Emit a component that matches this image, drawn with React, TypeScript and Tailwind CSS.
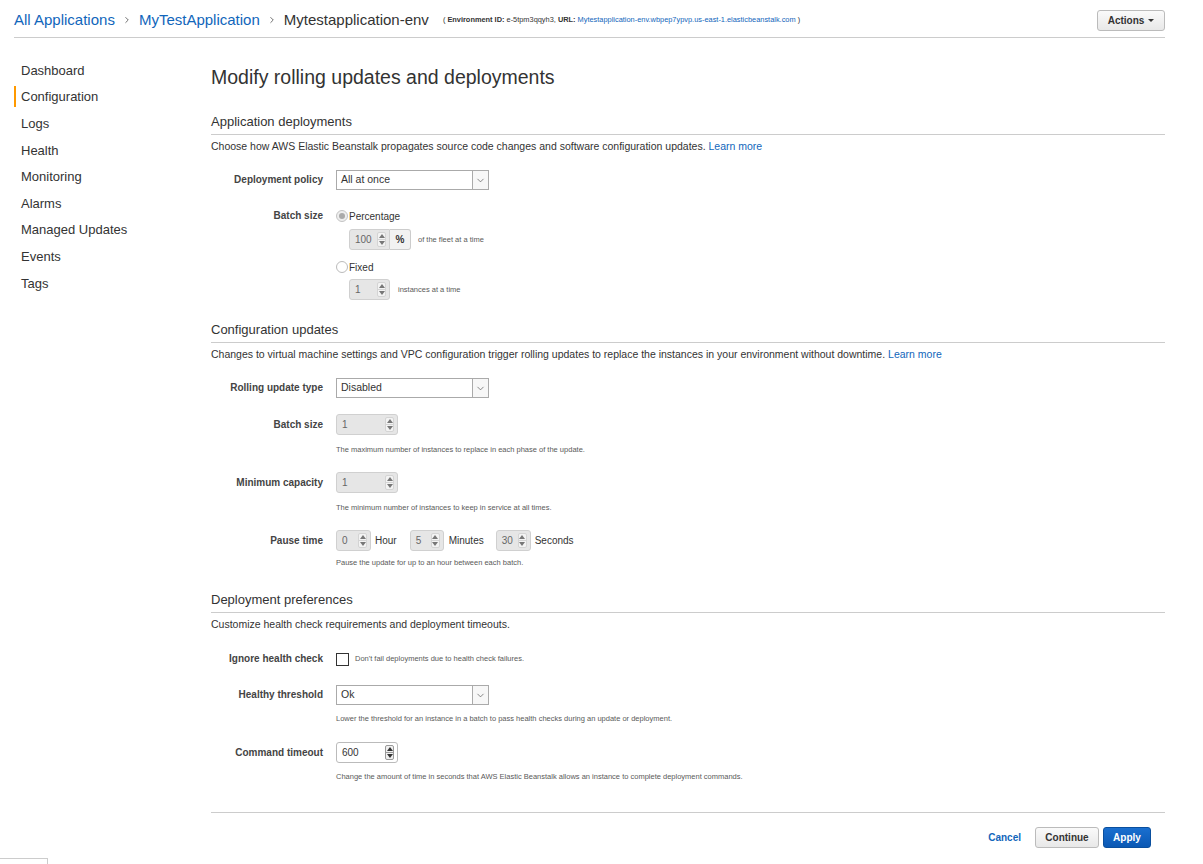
import { ChevronDown, ChevronRight } from "lucide-react";

const nav = [
  "Dashboard",
  "Configuration",
  "Logs",
  "Health",
  "Monitoring",
  "Alarms",
  "Managed Updates",
  "Events",
  "Tags",
];

function Spinner({ strong }: { strong?: boolean }) {
  const c = strong ? "border-b-[#333]" : "border-b-[#777]";
  const d = strong ? "border-t-[#333]" : "border-t-[#777]";
  return (
    <div
      className={`flex flex-col items-center justify-around w-[9px] h-[15px] rounded-[2px] border ${
        strong ? "border-[#999] bg-[#f0f0f0]" : "border-[#d4d4d4] bg-[#f3f3f3]"
      }`}
    >
      <div className={`w-0 h-0 border-l-[3px] border-r-[3px] border-b-[4px] border-l-transparent border-r-transparent ${c}`} />
      <div className={`w-full h-px ${strong ? "bg-[#999]" : "bg-[#d4d4d4]"}`} />
      <div className={`w-0 h-0 border-l-[3px] border-r-[3px] border-t-[4px] border-l-transparent border-r-transparent ${d}`} />
    </div>
  );
}

function NumBox({
  value,
  w,
  enabled,
  addon,
}: {
  value: string;
  w: string;
  enabled?: boolean;
  addon?: boolean;
}) {
  return (
    <div className="flex">
      <div
        className={`${w} h-[21px] flex items-center pl-[5px] pr-[3px] border text-[10px] ${
          enabled
            ? "bg-white border-[#bbb] text-[#333] rounded-[3px]"
            : "bg-[#e6e6e6] border-[#d0d0d0] text-[#666]"
        } ${addon ? "rounded-l-[3px]" : "rounded-[3px]"}`}
      >
        <span className="flex-1">{value}</span>
        <Spinner strong={enabled} />
      </div>
      {addon && (
        <div className="w-[21px] h-[21px] flex items-center justify-center border border-l-0 border-[#ccc] rounded-r-[3px] bg-[#f2f2f2] text-[10px] font-bold text-[#333]">
          %
        </div>
      )}
    </div>
  );
}

function Select({ value }: { value: string }) {
  return (
    <div className="w-[153px] h-[20px] flex items-center border border-[#aaa] bg-white text-[10.5px] text-[#333]">
      <span className="flex-1 pl-[4px]">{value}</span>
      <div className="w-[16px] h-full flex items-center justify-center border-l border-[#aaa] bg-[#f7f7f7]">
        <ChevronDown size={11} strokeWidth={1.5} color="#555" />
      </div>
    </div>
  );
}

function Label({ children }: { children: React.ReactNode }) {
  return (
    <div className="w-[112px] text-right text-[10px] font-bold text-[#444] leading-[20px] shrink-0">
      {children}
    </div>
  );
}

function Help({ children, cls = "" }: { children: React.ReactNode; cls?: string }) {
  return (
    <div className={`ml-[125px] text-[7.5px] leading-[12px] text-[#5a5a5a] ${cls}`}>
      {children}
    </div>
  );
}

function Section({ title, desc }: { title: string; desc: React.ReactNode }) {
  return (
    <>
      <div className="text-[13px] leading-[20px] text-[#333] pb-[2px] border-b border-[#ccc]">
        {title}
      </div>
      <div className="mt-[3px] text-[10.5px] leading-[16px] text-[#333]">{desc}</div>
    </>
  );
}

function Radio({ checked, label }: { checked?: boolean; label: string }) {
  return (
    <div className="flex items-center h-[16px] text-[10px] text-[#333]">
      <div
        className={`w-[12px] h-[12px] rounded-full border flex items-center justify-center ${
          checked ? "border-[#c4c4c4] bg-[#eee]" : "border-[#bbb] bg-white"
        }`}
      >
        {checked && <div className="w-[6px] h-[6px] rounded-full bg-[#aaa]" />}
      </div>
      <span className="ml-[1px]">{label}</span>
    </div>
  );
}

export default function App() {
  return (
    <div className="min-h-screen bg-white font-['Liberation_Sans',Arial,sans-serif] text-[#333]">
      <div className="ml-[14px] w-[1151px]">
        <div className="flex items-center h-[38px] pt-[3px] border-b border-[#ccc]">
          <span className="text-[15px] text-[#1166bb]">All Applications</span>
          <ChevronRight size={10} strokeWidth={2} color="#555" className="mx-[7px]" />
          <span className="text-[15px] text-[#1166bb]">MyTestApplication</span>
          <ChevronRight size={10} strokeWidth={2} color="#555" className="mx-[7px]" />
          <span className="text-[15px] text-[#333]">Mytestapplication-env</span>
          <span className="ml-[14px] text-[7.4px] text-[#333]">
            ( <b>Environment ID:</b> e-5tpm3qqyh3, <b>URL:</b>{" "}
            <span className="text-[#1166bb]">
              Mytestapplication-env.wbpep7ypvp.us-east-1.elasticbeanstalk.com
            </span>{" "}
            )
          </span>
          <div className="ml-auto w-[68px] h-[21px] flex items-center justify-center gap-[4px] rounded-[3px] border border-[#bbb] bg-gradient-to-b from-[#fafafa] to-[#e8e8e8] text-[10px] font-bold text-[#333]">
            Actions
            <div className="w-0 h-0 border-l-[3px] border-r-[3px] border-t-[3px] border-l-transparent border-r-transparent border-t-[#333]" />
          </div>
        </div>

        <div className="flex">
          <div className="w-[197px] shrink-0 pt-[19px]">
            {nav.map((n) => (
              <div key={n} className="h-[26.6px] flex items-center">
                <div
                  className={`border-l-2 pl-[5px] leading-[21px] text-[13px] text-[#333] ${
                    n === "Configuration" ? "border-[#ff9900]" : "border-transparent"
                  }`}
                >
                  {n}
                </div>
              </div>
            ))}
          </div>

          <div className="w-[954px] pt-[24px]">
            <div className="text-[19.5px] leading-[30px] text-[#333]">
              Modify rolling updates and deployments
            </div>

            <div className="mt-[20px]">
              <Section
                title="Application deployments"
                desc={
                  <>
                    Choose how AWS Elastic Beanstalk propagates source code changes and software
                    configuration updates. <span className="text-[#1166bb]">Learn more</span>
                  </>
                }
              />
            </div>

            <div className="mt-[16px] flex gap-[13px]">
              <Label>Deployment policy</Label>
              <Select value="All at once" />
            </div>

            <div className="mt-[16px] flex gap-[13px]">
              <Label>Batch size</Label>
              <div className="pt-[2px]">
                <Radio checked label="Percentage" />
                <div className="mt-[5px] ml-[13px] flex items-center">
                  <NumBox value="100" w="w-[41px]" addon />
                  <span className="ml-[7px] text-[7.5px] text-[#5a5a5a]">of the fleet at a time</span>
                </div>
                <div className="mt-[9px]">
                  <Radio label="Fixed" />
                </div>
                <div className="mt-[4px] ml-[13px] flex items-center">
                  <NumBox value="1" w="w-[41px]" />
                  <span className="ml-[8px] text-[7.5px] text-[#5a5a5a]">instances at a time</span>
                </div>
              </div>
            </div>

            <div className="mt-[20px]">
              <Section
                title="Configuration updates"
                desc={
                  <>
                    Changes to virtual machine settings and VPC configuration trigger rolling updates to
                    replace the instances in your environment without downtime.{" "}
                    <span className="text-[#1166bb]">Learn more</span>
                  </>
                }
              />
            </div>

            <div className="mt-[16px] flex gap-[13px]">
              <Label>Rolling update type</Label>
              <Select value="Disabled" />
            </div>

            <div className="mt-[16px] flex gap-[13px] items-center">
              <Label>Batch size</Label>
              <NumBox value="1" w="w-[62px]" />
            </div>
            <Help cls="mt-[9px]">The maximum number of instances to replace in each phase of the update.</Help>

            <div className="mt-[16px] flex gap-[13px] items-center">
              <Label>Minimum capacity</Label>
              <NumBox value="1" w="w-[62px]" />
            </div>
            <Help cls="mt-[9px]">The minimum number of instances to keep in service at all times.</Help>

            <div className="mt-[16px] flex gap-[13px] items-center">
              <Label>Pause time</Label>
              <div className="flex items-center text-[10px] text-[#333]">
                <NumBox value="0" w="w-[35px]" />
                <span className="ml-[4px] mr-[13px]">Hour</span>
                <NumBox value="5" w="w-[34px]" />
                <span className="ml-[5px] mr-[12px]">Minutes</span>
                <NumBox value="30" w="w-[35px]" />
                <span className="ml-[4px]">Seconds</span>
              </div>
            </div>
            <Help cls="mt-[6px]">Pause the update for up to an hour between each batch.</Help>

            <div className="mt-[21px]">
              <Section
                title="Deployment preferences"
                desc="Customize health check requirements and deployment timeouts."
              />
            </div>

            <div className="mt-[17px] flex gap-[13px] items-center">
              <Label>Ignore health check</Label>
              <div className="flex items-center">
                <div className="w-[13px] h-[13px] border border-[#333] bg-white" />
                <span className="ml-[6px] text-[7.5px] text-[#5a5a5a]">
                  Don't fail deployments due to health check failures.
                </span>
              </div>
            </div>

            <div className="mt-[16px] flex gap-[13px]">
              <Label>Healthy threshold</Label>
              <Select value="Ok" />
            </div>
            <Help cls="mt-[8px]">
              Lower the threshold for an instance in a batch to pass health checks during an update or
              deployment.
            </Help>

            <div className="mt-[17px] flex gap-[13px] items-center">
              <Label>Command timeout</Label>
              <NumBox value="600" w="w-[62px]" enabled />
            </div>
            <Help cls="mt-[8px]">
              Change the amount of time in seconds that AWS Elastic Beanstalk allows an instance to
              complete deployment commands.
            </Help>

            <div className="mt-[29px] border-t border-[#ccc] pt-[14px] pr-[14px] flex items-center justify-end">
              <span className="text-[10px] font-bold text-[#1166bb] mr-[14px]">Cancel</span>
              <div className="w-[64px] h-[21px] flex items-center justify-center rounded-[3px] border border-[#bbb] bg-gradient-to-b from-[#fafafa] to-[#e8e8e8] text-[10px] font-bold text-[#333]">
                Continue
              </div>
              <div className="ml-[4px] w-[48px] h-[21px] flex items-center justify-center rounded-[3px] border border-[#0a4f9e] bg-gradient-to-b from-[#1a6fcf] to-[#0a58b4] text-[10px] font-bold text-white">
                Apply
              </div>
            </div>
          </div>
        </div>
      </div>
      <div className="fixed left-0 bottom-0 w-[48px] h-[6px] border-t border-r border-[#ccc] bg-white" />
    </div>
  );
}
